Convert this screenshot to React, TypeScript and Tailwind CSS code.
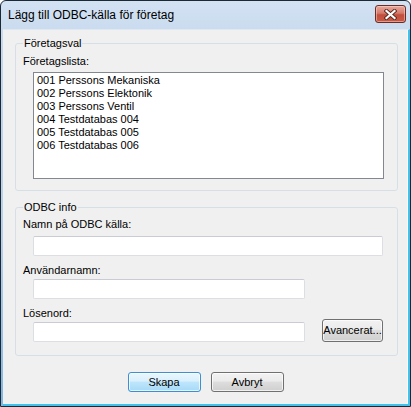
import React from "react";

const ui = "font-['Liberation_Sans',Arial,sans-serif] text-[11px] leading-[13px] text-black";

const companies = [
  "001 Perssons Mekaniska",
  "002 Perssons Elektonik",
  "003 Perssons Ventil",
  "004 Testdatabas 004",
  "005 Testdatabas 005",
  "006 Testdatabas 006",
];

const CloseGlyph = () => (
  <svg width={13} height={11} viewBox="0 0 13 11" fill="none">
    <path d="M2.5 2l8 7M10.5 2l-8 7" stroke="#5a2a22" strokeWidth={4} strokeLinecap="square" />
    <path d="M2.5 2l8 7M10.5 2l-8 7" stroke="#ffffff" strokeWidth={2.2} strokeLinecap="square" />
  </svg>
);

const TextBox = ({ w }: { w: string }) => (
  <div className={`${w} h-[20px] bg-white border border-[#dcdee4] border-t-[#c9ccd3] rounded-[2px]`} />
);

const Button = ({
  label,
  primary,
  className,
}: {
  label: string;
  primary?: boolean;
  className?: string;
}) => (
  <button
    type="button"
    className={
      (primary
        ? "border-[#3c8fd0] bg-[linear-gradient(#eaf6fd_0%,#d9f0fc_45%,#bee6fd_50%,#a7d9f5_100%)] "
        : "border-[#707070] bg-[linear-gradient(#f2f2f2_0%,#ebebeb_45%,#dddddd_50%,#cfcfcf_100%)] ") +
      "flex items-center justify-center rounded-[3px] border shadow-[inset_0_0_0_1px_rgba(255,255,255,0.7)] whitespace-nowrap " +
      ui +
      " " +
      (className ?? "")
    }
  >
    {label}
  </button>
);

export default function App() {
  return (
    <div className="w-[411px] h-[407px] flex flex-col rounded-t-[6px] border border-[#1d2835] bg-[linear-gradient(180deg,#d3e2f3_0%,#c4d7ed_12%,#b7cfe9_60%,#7fb6e2_100%)] overflow-hidden">
      {/* title bar */}
      <div className="h-[28px] shrink-0 flex items-start justify-between pl-[7px] pr-[4px]">
        <span className="mt-[7px] font-['Liberation_Sans',Arial,sans-serif] text-[12px] leading-[15px] text-black">
          Lägg till ODBC-källa för företag
        </span>
        <div className="mt-[4px] w-[31px] h-[18px] flex items-center justify-center rounded-[3px] border border-[#6b2c25] bg-[linear-gradient(#e9a99c_0%,#d47a6c_45%,#c24f3e_55%,#c95a45_100%)] shadow-[inset_0_0_0_1px_rgba(255,220,210,0.5)]">
          <CloseGlyph />
        </div>
      </div>

      {/* client area */}
      <div className="flex-1 ml-[2px] flex flex-col bg-[#f0f0f0] border-t border-t-[#dfe8f1] border-r-2 border-r-[#3ec3ee] border-b-2 border-b-[#3ec3ee] shadow-[inset_-1px_0_0_#fbfbfb] pt-[6px]">
        <fieldset className="ml-[12px] w-[383px] rounded-[3px] border border-[#d5dfe5] pb-[11px]">
          <legend className={`ml-[7px] px-[1px] ${ui} leading-[14px]`}>Företagsval</legend>
          <div className={`pt-[5px] pl-[7px] ${ui}`}>Företagslista:</div>
          <div className="mt-[4px] ml-[17px] w-[351px] h-[107px] bg-white border border-[#828790] pt-[1px] pl-[3px]">
            {companies.map((c) => (
              <div key={c} className={ui}>
                {c}
              </div>
            ))}
          </div>
        </fieldset>

        <fieldset className="mt-[9px] ml-[12px] w-[383px] rounded-[3px] border border-[#d5dfe5] pb-[13px]">
          <legend className={`ml-[7px] px-[1px] ${ui} leading-[14px]`}>ODBC info</legend>
          <div className="pl-[17px] flex flex-col">
            <div className={`mt-[4px] -ml-[10px] ${ui}`}>Namn på ODBC källa:</div>
            <div className="mt-[5px]">
              <TextBox w="w-[350px]" />
            </div>
            <div className={`mt-[8px] -ml-[10px] ${ui}`}>Användarnamn:</div>
            <div className="mt-[2px]">
              <TextBox w="w-[272px]" />
            </div>
            <div className={`mt-[8px] -ml-[10px] ${ui}`}>Lösenord:</div>
            <div className="-mt-[1px] flex items-end gap-[17px]">
              <TextBox w="w-[272px]" />
              <Button label="Avancerat..." className="w-[61px] h-[23px]" />
            </div>
          </div>
        </fieldset>

        <div className="mt-[16px] flex justify-center gap-[10px]">
          <Button label="Skapa" primary className="w-[73px] h-[20px]" />
          <Button label="Avbryt" className="w-[73px] h-[20px]" />
        </div>
      </div>
    </div>
  );
}
